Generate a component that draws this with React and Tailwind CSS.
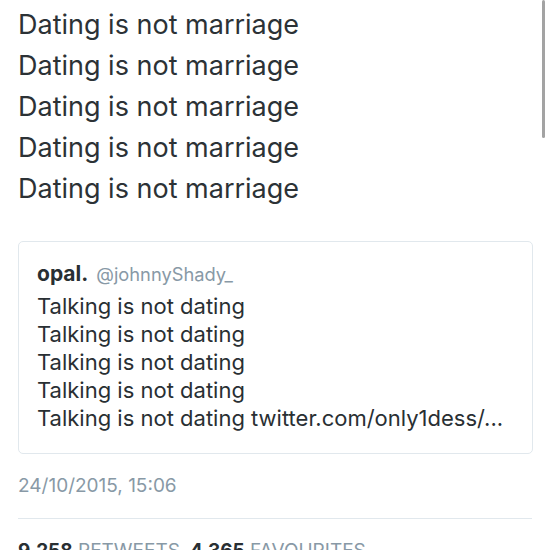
export default function App() {
  const lines = [1, 2, 3, 4, 5];
  return (
    <div
      className="relative w-[550px] h-[550px] overflow-hidden bg-white"
      style={{ fontFamily: "Inter, 'Noto Sans', sans-serif" }}
    >
      {/* scroll indicator */}
      <div className="absolute right-[5px] top-0 w-[3px] h-[138px] rounded-full bg-[#a3a3a3]" />

      <div className="px-[18px] pt-[4px]">
        <div className="text-[27px] leading-[41px] text-[#2c3236]">
          {lines.map((i) => (
            <div key={i}>Dating is not marriage</div>
          ))}
        </div>

        <div className="mt-[32px] w-[515px] h-[213px] border border-[#e1e8ed] rounded-[5px] px-[18px] pt-[16px]">
          <div className="flex items-baseline gap-[8px]">
            <span className="text-[21px] font-bold text-[#292f33]">opal.</span>
            <span className="text-[18.3px] text-[#8899a6]">@johnnyShady_</span>
          </div>
          <div className="mt-[2px] text-[22px] leading-[28px] text-[#292f33]">
            <div>Talking is not dating</div>
            <div>Talking is not dating</div>
            <div>Talking is not dating</div>
            <div>Talking is not dating</div>
            <div>Talking is not dating twitter.com/only1dess/...</div>
          </div>
        </div>

        <div className="mt-[18px] text-[19px] text-[#8899a6]">24/10/2015, 15:06</div>

        <div className="mt-[17px] w-[514px] h-px bg-[#e1e8ed]" />

        <div className="mt-[18px] flex items-baseline gap-[10px] text-[19px]">
          <span>
            <span className="font-bold text-[#292f33]">9,258</span>{" "}
            <span className="text-[#8899a6]">RETWEETS</span>
          </span>
          <span>
            <span className="font-bold text-[#292f33]">4,365</span>{" "}
            <span className="text-[#8899a6]">FAVOURITES</span>
          </span>
        </div>
      </div>
    </div>
  );
}
